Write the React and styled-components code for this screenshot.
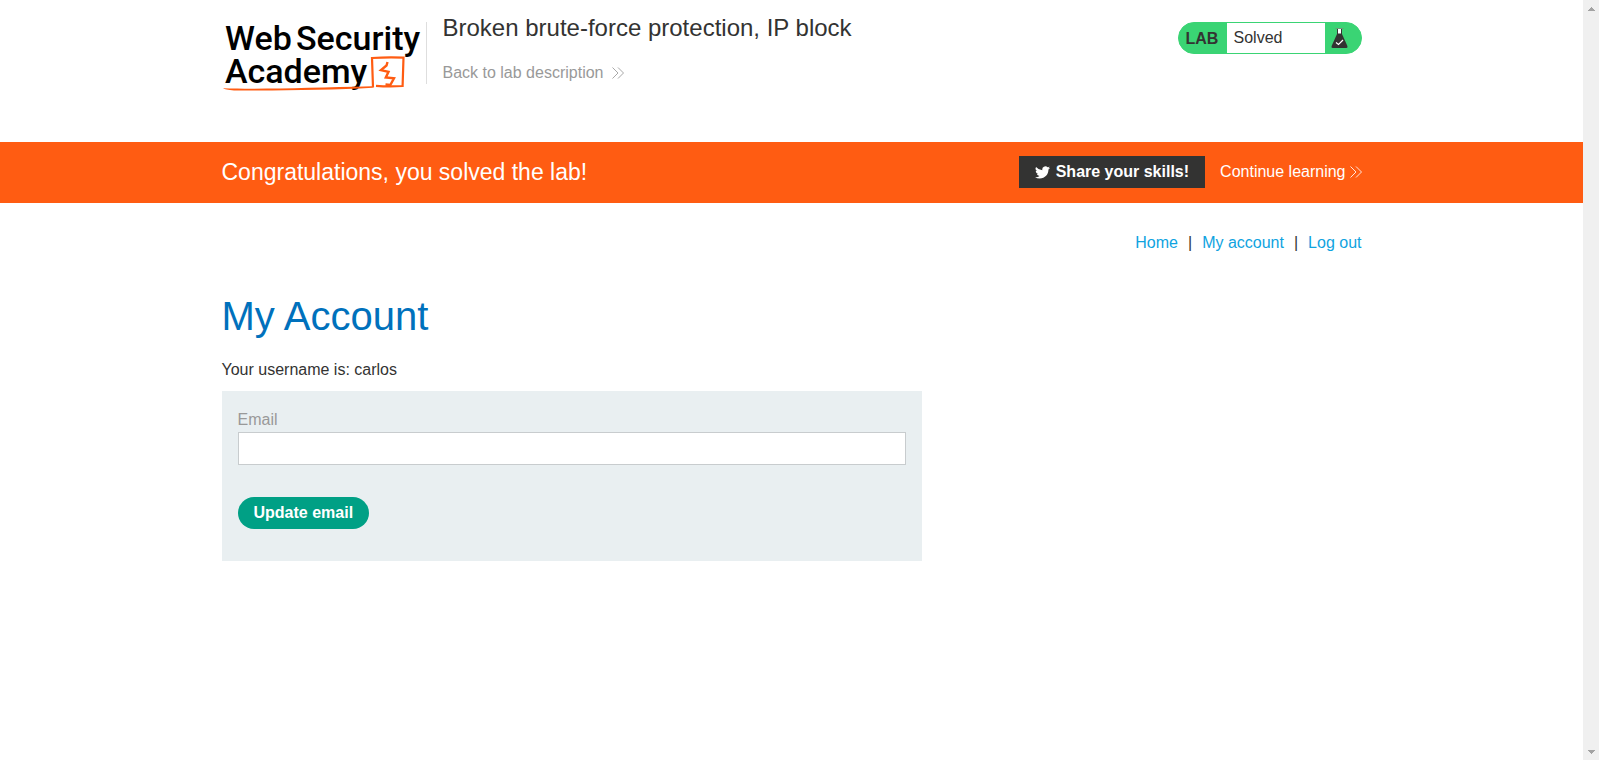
import React from "react";
import styled, { createGlobalStyle } from "styled-components";

const GlobalStyle = createGlobalStyle`
  *, *::before, *::after { box-sizing: border-box; }
  body {
    margin: 0;
    background: #fff;
    color: #333332;
    font: 16px/24px "Liberation Sans", Arial, sans-serif;
  }
`;

const Shell = styled.div`
  display: grid;
  grid-template-columns: minmax(0, 1fr) 16px;
  min-height: 100vh;
`;

const Page = styled.div`
  min-width: 0;
`;

const ScrollRail = styled.div`
  position: sticky;
  top: 0;
  height: 100vh;
  display: flex;
  flex-direction: column;
  justify-content: space-between;
  align-items: center;
  padding: 7px 0 6px;
  background: #f0f0f0;
`;

const Container = styled.div`
  max-width: 1140px;
  margin: 0 auto;
`;

const Header = styled.header`
  padding: 16px 0 50px;
`;

const HeaderRow = styled(Container)`
  display: flex;
  align-items: flex-start;
`;

const LogoLink = styled.a`
  display: block;
  flex: none;
  svg { display: block; }
`;

const Divider = styled.div`
  flex: none;
  width: 1px;
  height: 62px;
  margin-top: 6px;
  background: #dedede;
`;

const TitleBlock = styled.div`
  flex: 1;
  padding-left: 16px;
`;

const LabTitle = styled.h2`
  margin: 0 0 21px;
  font-size: 24px;
  line-height: 24px;
  font-weight: 400;
`;

const ArrowLink = styled.a`
  display: inline-flex;
  align-items: center;
  gap: ${(p) => p.$gap}px;
  color: ${(p) => p.$color};
  text-decoration: none;
`;

const Status = styled.div`
  display: flex;
  width: 184px;
  height: 32px;
  margin-top: 6px;
  border: 1px solid #3ad474;
  border-radius: 16px;
  background: #3ad474;
  overflow: hidden;
`;

const StatusTag = styled.strong`
  width: 48px;
  padding-left: 7px;
  line-height: 32px;
`;

const StatusText = styled.p`
  flex: 1;
  margin: 0;
  padding-left: 7px;
  background: #fff;
  line-height: 29px;
`;

const StatusIcon = styled.div`
  width: 36px;
  padding: 5px 0 0 6px;
  svg { display: block; }
`;

const Banner = styled.section`
  background: #ff5c12;
  color: #fff;
`;

const BannerRow = styled(Container)`
  display: flex;
  align-items: center;
  justify-content: space-between;
  padding: 14px 0 15px;
`;

const BannerTitle = styled.h4`
  margin: 0;
  font-size: 23px;
  font-weight: 400;
`;

const BannerActions = styled.div`
  display: flex;
  align-items: center;
  gap: 15px;
`;

const ShareButton = styled.button`
  display: flex;
  align-items: center;
  gap: 6px;
  height: 32px;
  padding: 0 16px;
  border: 0;
  background: #333332;
  color: #fff;
  font: inherit;
  font-weight: 700;
`;

const Nav = styled.nav`
  display: flex;
  justify-content: flex-end;
  gap: 10px;
  padding: 28px 0 0;
`;

const NavLink = styled.a`
  color: #0fa3df;
  text-decoration: none;
`;

const PageTitle = styled.h1`
  margin: 34px 0 15px;
  color: #0071bc;
  font-size: 40px;
  line-height: 54px;
  font-weight: 400;
`;

const Username = styled.p`
  margin: 0 0 9px;
`;

const Form = styled.form`
  max-width: 700px;
  padding: 17px 16px 32px;
  background: #e9eff1;
`;

const Label = styled.label`
  display: block;
  color: #999;
`;

const TextInput = styled.input`
  display: block;
  width: 100%;
  height: 33px;
  margin-bottom: 32px;
  padding: 0 8px;
  border: 1px solid #c8ccce;
  border-radius: 0;
  background: #fff;
  font: inherit;
  outline: 0;
`;

const SubmitButton = styled.button`
  display: block;
  height: 32px;
  padding: 0 16px;
  border: 0;
  border-radius: 16px;
  background: #00a085;
  color: #fff;
  font: inherit;
  font-weight: 700;
`;

const Logo = () => (
  <svg width="204" height="76" viewBox="0 -4 204 76" role="img" aria-label="Web Security Academy">
    <g fontFamily="Roboto, sans-serif" fontWeight="500" fontSize="34" fill="#000">
      <text x="3" y="30">Web</text>
      <text x="74" y="30">Security</text>
      <text x="3" y="63">Academy</text>
    </g>
    <path d="M1 68.2 C40 69.5 90 67.6 150 66.2 L150.8 67.8 C110 70 50 71 12 70.4 Q3 69.8 1 68.2Z" fill="#ff5c12" />
    <path d="M151 67.5 L150 38 Q166 36.8 181.5 37.6 L180.6 66 Q167 67 154 65.8" fill="none" stroke="#ff5c12" strokeWidth="2.2" />
    <path d="M165.5 42 L164.5 45.5 L159 50.2 L166.5 51.8 L163.8 57.5 L172 58.3 L168.3 65 L163.5 64.5" fill="none" stroke="#ff5c12" strokeWidth="2.4" />
  </svg>
);

const DoubleChevron = () => (
  <svg width="12" height="12" viewBox="0 0 12 12" fill="none" stroke="currentColor" strokeWidth="1" opacity="0.85" aria-hidden="true">
    <path d="M0.5 0.5 L6 6 L0.5 11.5 M6 0.5 L11.5 6 L6 11.5" />
  </svg>
);

const Flask = () => (
  <svg width="17" height="20" viewBox="0 0 17 20" aria-hidden="true">
    <rect x="4.5" y="0" width="8" height="1" fill="#6c9a78" />
    <path d="M6 1 H11 V6 L16.4 18 Q17 20 15.4 20 H1.6 Q0 20 .6 18 L6 6Z" fill="#333332" />
    <path d="M7 1 H10 V5.5 H7Z" fill="#fff" />
    <path d="M5 14.5 L7.5 16.5 L12 12" fill="none" stroke="#fff" strokeWidth="1.2" />
  </svg>
);

const Bird = () => (
  <svg width="15" height="13" viewBox="0 0 24 20" fill="#fff" aria-hidden="true">
    <path d="M24 2.4a9.8 9.8 0 0 1-2.8.8A5 5 0 0 0 23.3.5a9.9 9.9 0 0 1-3.1 1.2 4.9 4.9 0 0 0-8.4 4.5A14 14 0 0 1 1.7 1a4.9 4.9 0 0 0 1.5 6.6 4.9 4.9 0 0 1-2.2-.6 4.9 4.9 0 0 0 3.9 4.9 5 5 0 0 1-2.2.1 4.9 4.9 0 0 0 4.6 3.4A9.9 9.9 0 0 1 0 17.5a13.9 13.9 0 0 0 7.5 2.2c9.1 0 14.3-7.7 14-14.6A10 10 0 0 0 24 2.4Z" />
  </svg>
);

const Triangle = ({ down }) => (
  <svg width="7" height="4" viewBox="0 0 7 4" fill="#a3a3a3" shapeRendering="crispEdges" aria-hidden="true">
    <path d={down ? "M0 0H7V1H6V2H5V3H4V4H3V3H2V2H1V1H0Z" : "M3 0H4V1H5V2H6V3H7V4H0V3H1V2H2V1H3Z"} />
  </svg>
);

export default function App() {
  return (
    <Shell>
      <GlobalStyle />
      <Page>
        <Header>
          <HeaderRow>
            <LogoLink href="#"><Logo /></LogoLink>
            <Divider />
            <TitleBlock>
              <LabTitle>Broken brute-force protection, IP block</LabTitle>
              <ArrowLink href="#" $gap={9} $color="#999">
                Back to lab description <DoubleChevron />
              </ArrowLink>
            </TitleBlock>
            <Status>
              <StatusTag>LAB</StatusTag>
              <StatusText>Solved</StatusText>
              <StatusIcon><Flask /></StatusIcon>
            </Status>
          </HeaderRow>
        </Header>
        <Banner>
          <BannerRow>
            <BannerTitle>Congratulations, you solved the lab!</BannerTitle>
            <BannerActions>
              <ShareButton type="button"><Bird />Share your skills!</ShareButton>
              <ArrowLink href="#" $gap={4} $color="#fff">
                Continue learning <DoubleChevron />
              </ArrowLink>
            </BannerActions>
          </BannerRow>
        </Banner>
        <Container as="main">
          <Nav>
            <NavLink href="#">Home</NavLink>
            <span>|</span>
            <NavLink href="#">My account</NavLink>
            <span>|</span>
            <NavLink href="#">Log out</NavLink>
          </Nav>
          <PageTitle>My Account</PageTitle>
          <Username>Your username is: carlos</Username>
          <Form onSubmit={(e) => e.preventDefault()}>
            <Label htmlFor="email">Email</Label>
            <TextInput id="email" type="email" name="email" />
            <SubmitButton type="submit">Update email</SubmitButton>
          </Form>
        </Container>
      </Page>
      <ScrollRail aria-hidden="true">
        <Triangle />
        <Triangle down />
      </ScrollRail>
    </Shell>
  );
}
